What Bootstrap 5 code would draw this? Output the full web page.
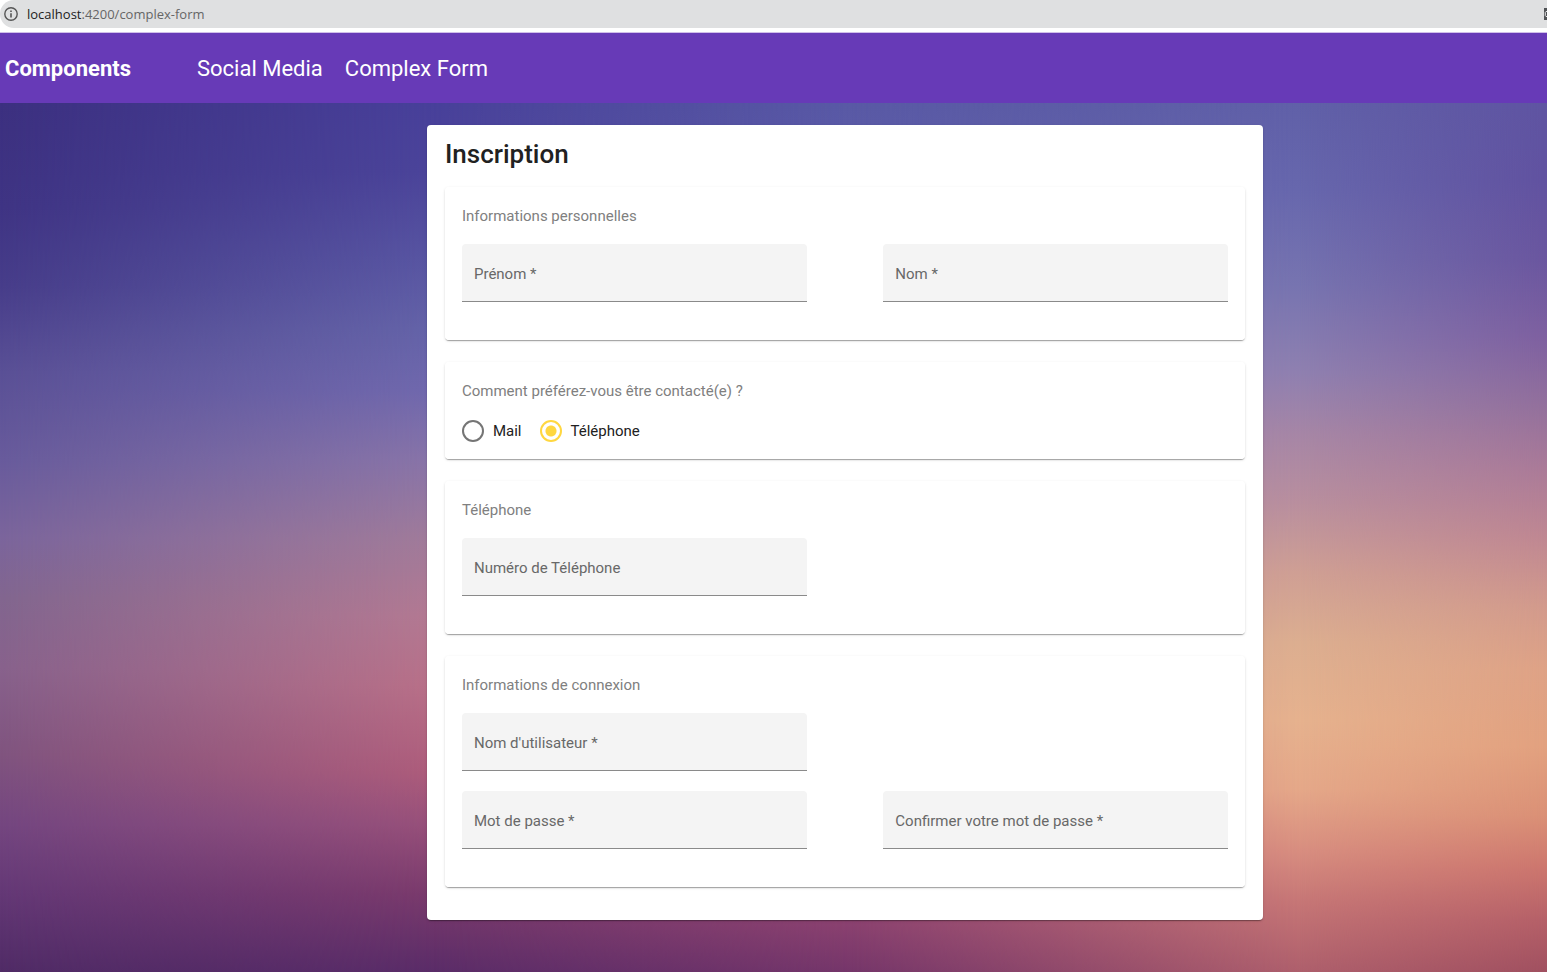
<!DOCTYPE html>
<html lang="fr">
<head>
<meta charset="utf-8">
<meta name="viewport" content="width=device-width, initial-scale=1">
<title>Complex Form</title>
<link rel="stylesheet" href="https://cdn.jsdelivr.net/npm/bootstrap@5.3.0/dist/css/bootstrap.min.css">
<style>
  body { font-family: Roboto, "Liberation Sans", sans-serif; color: #212121; background: #fff; }

  /* Address bar */
  .address-bar { height: 28px; margin-bottom: 4px; background: #dfe0e1; border-radius: 14px 0 0 14px; padding-left: 4px; gap: 9px; overflow: hidden; }
  .address-text { font-family: "Open Sans", "Noto Sans", sans-serif; font-size: 13px; line-height: 20px; color: #666; text-decoration: none; }
  .address-text span { color: #222; }

  /* Toolbar */
  .toolbar { min-height: 71px; background: #673ab7; border-top: 1px solid #d0bfe9; padding: 2px 5px 0; column-gap: 66px; }
  .toolbar a { color: #fff; font-size: 22px; line-height: 32px; text-decoration: none; }
  .toolbar-links { column-gap: 22px; }

  /* Sunset backdrop: vertical gradients cross-faded from left to right */
  .sunset { position: relative; isolation: isolate; padding: 22px 0 52px;
    background: linear-gradient(#3c3080, #3f3484 12%, #473d8a 21%, #5a5096 31%, #685b9c 41%, #7b659c 50%, #82668f 57%, #88628c 65%, #80547f 75%, #744680 83%, #643876 91%, #502b66); }
  .sunset-layer { position: absolute; inset: 0; z-index: -1; }
  .sunset-left { background: linear-gradient(#48409a, #4b449a 8%, #5855a2 18%, #6463a8 26%, #7068ad 33%, #8874a8 41%, #a07b9a 50%, #b37992 59%, #b87088 67%, #ad5c7b 77%, #97507a 83%, #7a3a6c 91%, #5a2c68);
    -webkit-mask-image: linear-gradient(to right, transparent, #000 28%); mask-image: linear-gradient(to right, transparent, #000 28%); }
  .sunset-middle { background: linear-gradient(#5959a5, #5c5ca8 8%, #8f7aa8 40%, #c48a8e 65%, #a85070 85%, #8c4270 94%, #75366a);
    -webkit-mask-image: linear-gradient(to right, transparent 28%, #000 55%); mask-image: linear-gradient(to right, transparent 28%, #000 55%); }
  .sunset-right { background: linear-gradient(#6060a8, #6767ad 10%, #7774b0 21%, #8f80b0 31%, #a686a6 38%, #b98f9e 46%, #cf9f94 54%, #dcae90 62%, #e6b28e 71%, #e5a889 79%, #d88e80 86%, #c67676 92%, #ae5f6c);
    -webkit-mask-image: linear-gradient(to right, transparent 55%, #000 84%); mask-image: linear-gradient(to right, transparent 55%, #000 84%); }
  .sunset-edge { background: linear-gradient(#5f54a2, #6152a0 9%, #6a569f 18%, #7e60a0 27%, #93709c 35%, #aa7a98 42%, #bf8792 50%, #d29a8c 58%, #dea286 65%, #e2a17f 74%, #da9076 82%, #cc766e 88%, #b56068 94%, #a05060);
    -webkit-mask-image: linear-gradient(to right, transparent 84%, #000); mask-image: linear-gradient(to right, transparent 84%, #000); }

  /* Form */
  .signup, .panel { background: #fff; border-radius: 4px; box-shadow: 0 2px 1px -1px rgba(0,0,0,.2), 0 1px 1px rgba(0,0,0,.14), 0 1px 3px rgba(0,0,0,.12); }
  .signup { width: 54.05%; margin-left: 27.6%; padding: 13px 18px 33px; }
  .signup h1 { font-size: 26px; line-height: 32px; font-weight: 500; margin: 0 0 17px; }
  .panel-stack { gap: 22px; }
  .panel { padding: 17px; }
  .panel legend { font-size: 15px; line-height: 24px; color: #808080; margin: 0 0 16px; }
  .field-grid { clear: both; display: grid; grid-template-columns: 45% 45%; column-gap: 10%; row-gap: 20px; padding-bottom: 21px; }
  .field-grid .form-control { height: 58px; min-height: 58px; border: 0; border-bottom: 1px solid #8a8a8a; border-radius: 4px 4px 0 0; background: #f4f4f4; font-size: 15px; }
  .field-grid .form-floating > label { font-size: 15px; line-height: 24px; padding: 17px 11px; color: #686868; }
  .field-grid .form-floating > .form-control:focus ~ label { color: #686868; }
  .start-row { grid-column: 1; }
  .choices { clear: both; gap: 18px; padding-top: 1px; }
  .choice { gap: 9px; font-size: 15px; line-height: 22px; }
  .choice .form-check-input { width: 22px; height: 22px; margin: 0; border: 2px solid #757575; background: #fff; }
  .choice .form-check-input:checked { border-color: #ffd740; background: radial-gradient(circle, #ffd740 5px, #fff 6px); }
</style>
</head>
<body class="d-flex flex-column min-vh-100">
<div class="address-bar d-flex align-items-center">
  <svg width="14" height="14" viewBox="0 0 14 14" fill="none" stroke="#555" aria-hidden="true"><circle cx="7" cy="7" r="6.2" stroke-width="1.4"/><path d="M7 6.2v4.2M7 3.5v1.6" stroke-width="1.6"/></svg>
  <a class="address-text" href="#"><span>localhost</span>:4200/complex-form</a>
  <svg class="ms-auto" width="3" height="12" viewBox="0 0 3 12" aria-hidden="true"><path d="M0 0h3v12H0z" fill="#505255"/><path d="M3 3.500H2L1.300 4.300v3.400l.7.800h1" fill="none" stroke="#e8e8e8" stroke-width="1"/></svg>
</div>
<nav class="toolbar d-flex flex-wrap align-items-center">
  <a class="fw-bold" href="#">Components</a>
  <div class="toolbar-links d-flex flex-wrap">
    <a href="#">Social Media</a>
    <a href="#">Complex Form</a>
  </div>
</nav>
<main class="sunset flex-grow-1">
  <div class="sunset-layer sunset-left"></div>
  <div class="sunset-layer sunset-middle"></div>
  <div class="sunset-layer sunset-right"></div>
  <div class="sunset-layer sunset-edge"></div>
  <form class="signup">
    <h1>Inscription</h1>
    <div class="panel-stack d-flex flex-column">
      <fieldset class="panel">
        <legend>Informations personnelles</legend>
        <div class="field-grid">
          <div class="form-floating"><input type="text" class="form-control" id="prenom" placeholder=" "><label for="prenom">Prénom *</label></div>
          <div class="form-floating"><input type="text" class="form-control" id="nom" placeholder=" "><label for="nom">Nom *</label></div>
        </div>
      </fieldset>
      <fieldset class="panel">
        <legend>Comment préférez-vous être contacté(e) ?</legend>
        <div class="choices d-flex">
          <label class="choice d-flex align-items-center" for="par-mail"><input class="form-check-input" type="radio" name="contact" id="par-mail">Mail</label>
          <label class="choice d-flex align-items-center" for="par-tel"><input class="form-check-input" type="radio" name="contact" id="par-tel" checked>Téléphone</label>
        </div>
      </fieldset>
      <fieldset class="panel">
        <legend>Téléphone</legend>
        <div class="field-grid">
          <div class="form-floating"><input type="tel" class="form-control" id="tel" placeholder=" "><label for="tel">Numéro de Téléphone</label></div>
        </div>
      </fieldset>
      <fieldset class="panel">
        <legend>Informations de connexion</legend>
        <div class="field-grid">
          <div class="form-floating"><input type="text" class="form-control" id="utilisateur" placeholder=" "><label for="utilisateur">Nom d'utilisateur *</label></div>
          <div class="form-floating start-row"><input type="password" class="form-control" id="passe" placeholder=" "><label for="passe">Mot de passe *</label></div>
          <div class="form-floating"><input type="password" class="form-control" id="confirmation" placeholder=" "><label for="confirmation">Confirmer votre mot de passe *</label></div>
        </div>
      </fieldset>
    </div>
  </form>
</main>
<script src="https://cdn.jsdelivr.net/npm/bootstrap@5.3.0/dist/js/bootstrap.bundle.min.js"></script>
</body>
</html>
